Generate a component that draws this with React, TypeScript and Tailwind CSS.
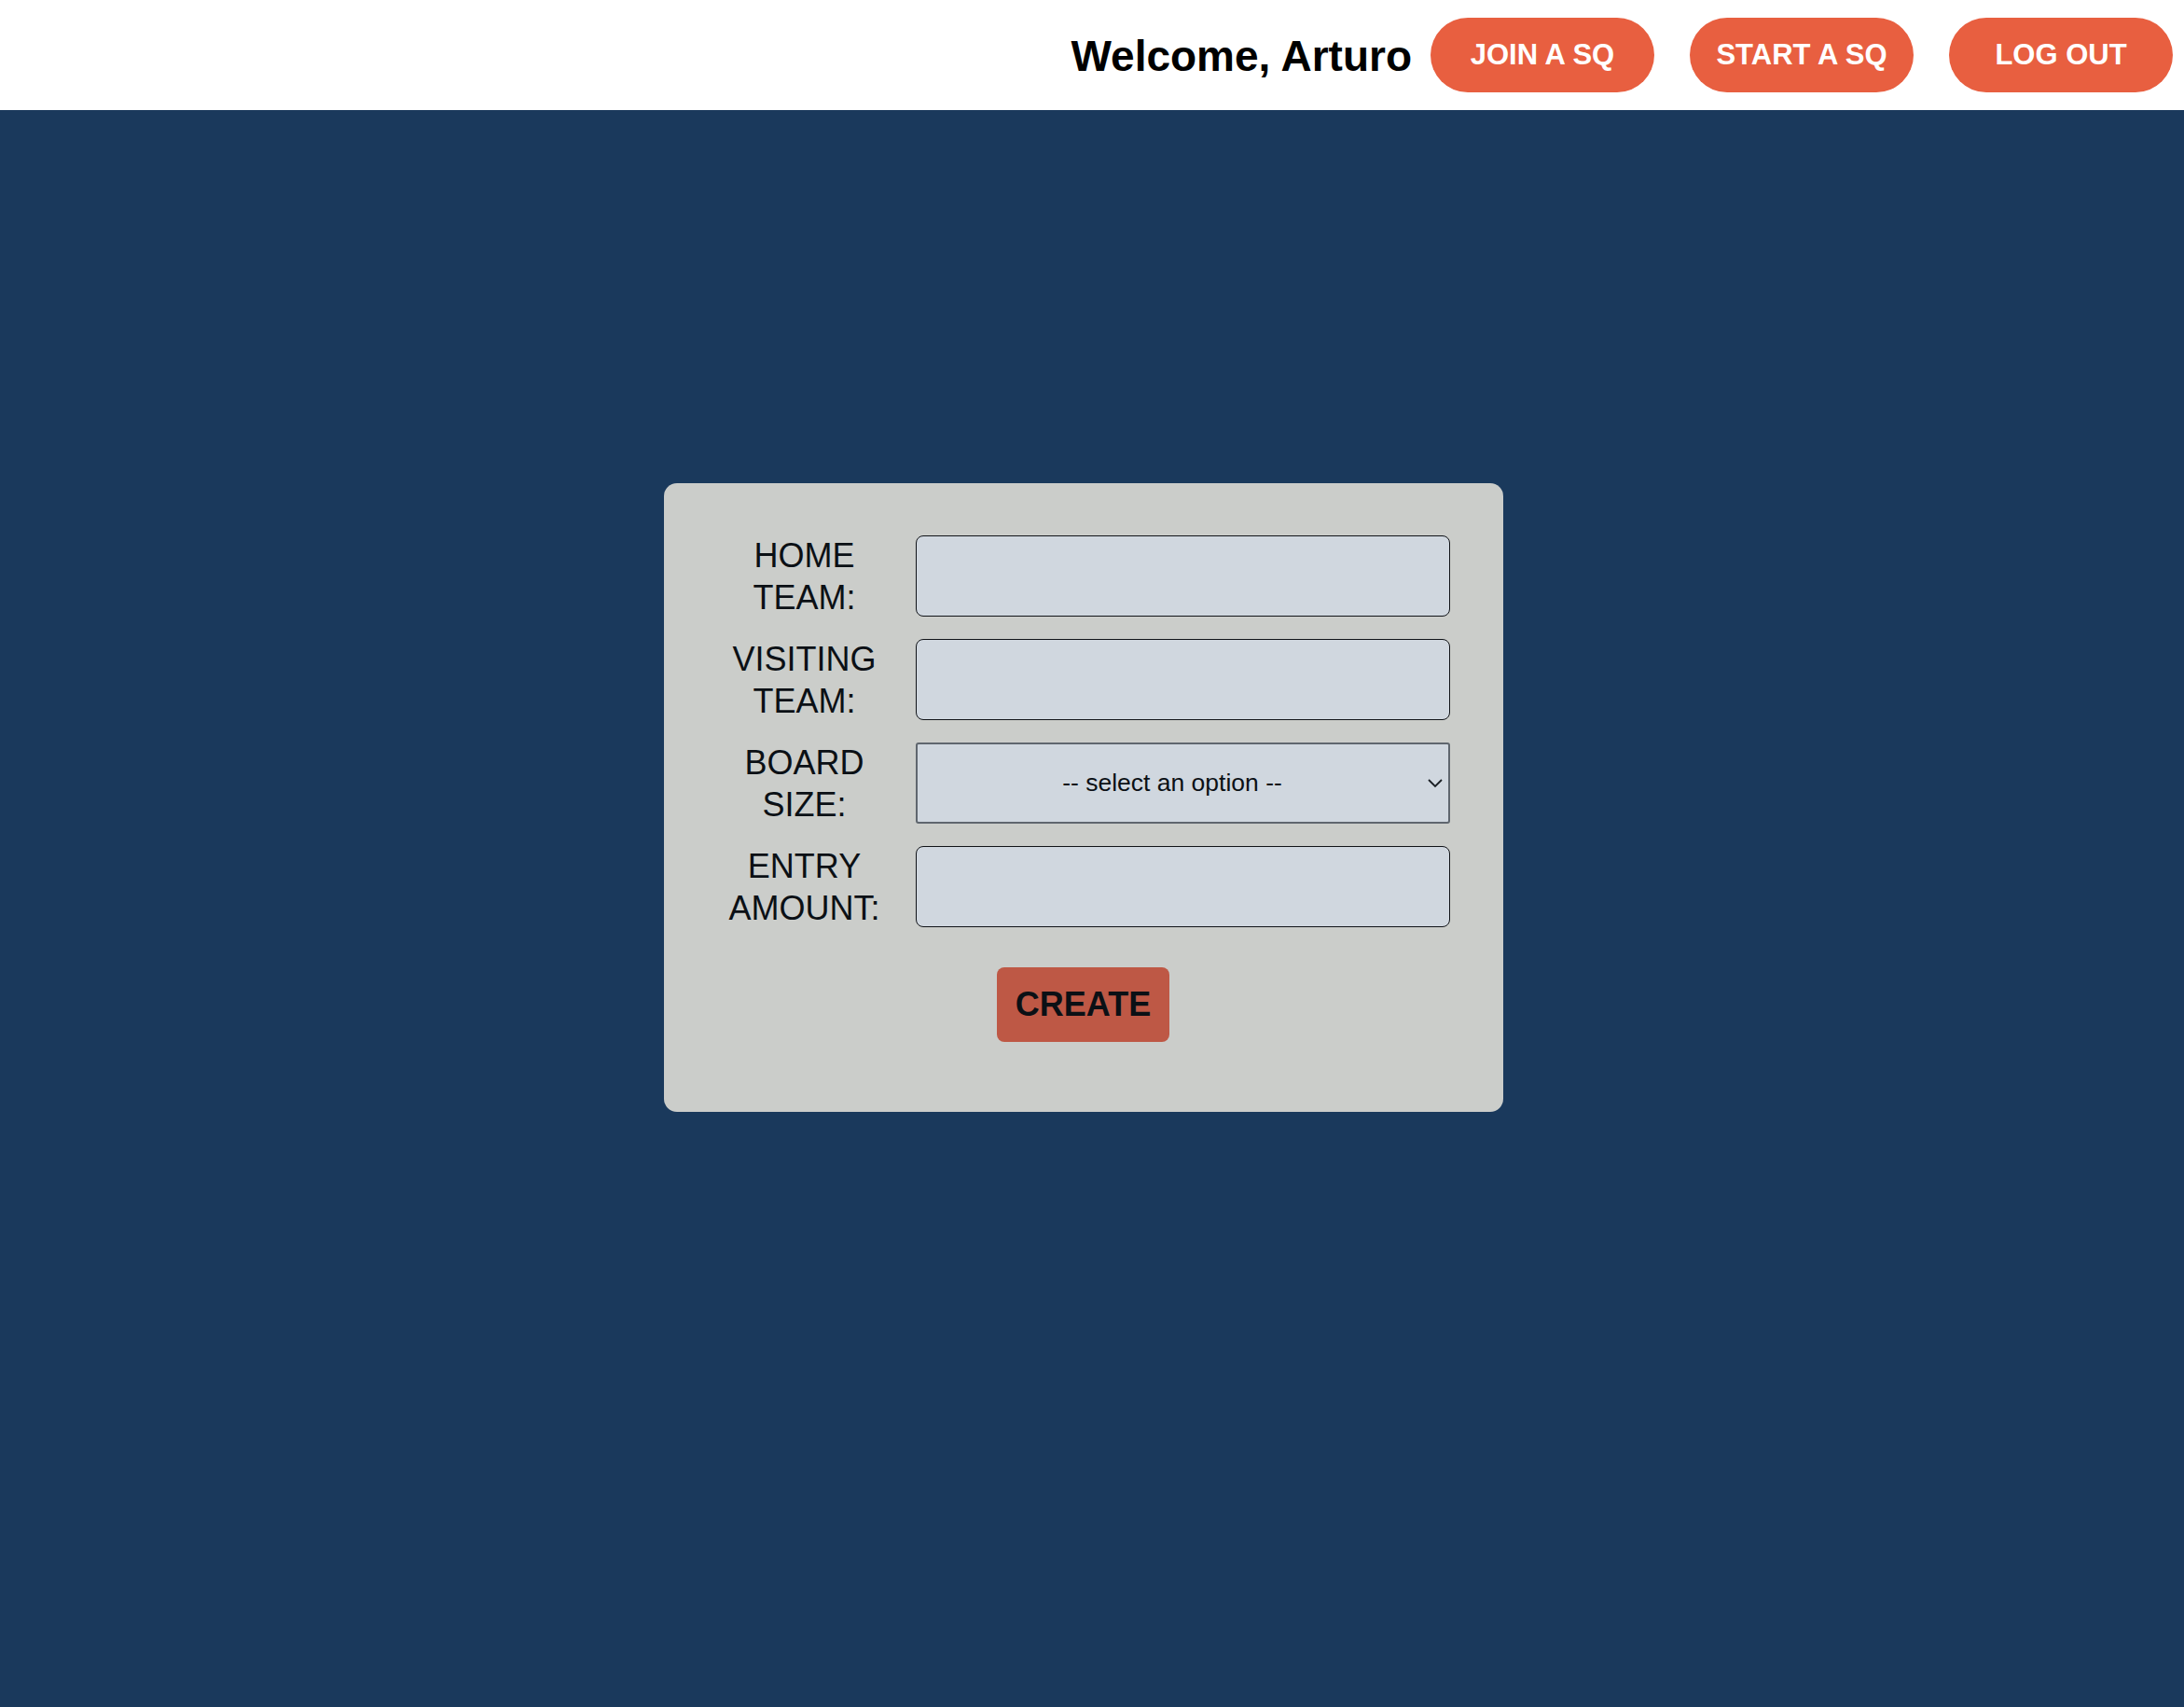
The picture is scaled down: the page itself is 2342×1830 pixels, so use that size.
import React from 'react';

const fields = [
  { label: ['HOME', 'TEAM:'], type: 'input' },
  { label: ['VISITING', 'TEAM:'], type: 'input' },
  { label: ['BOARD', 'SIZE:'], type: 'select' },
  { label: ['ENTRY', 'AMOUNT:'], type: 'input' },
];

const NavButton = ({ children }: { children: React.ReactNode }) => (
  <button className="h-[80px] w-[240px] rounded-full bg-[#e85f40] text-[31px] font-bold text-white">
    {children}
  </button>
);

const App = () => {
  return (
    <div className="min-h-[1830px] bg-[#1a395c] font-['Liberation_Sans',Arial,sans-serif]">
      {/* header */}
      <header className="flex h-[118px] items-center justify-end bg-white pr-[12px]">
        <h1 className="mr-[20px] mt-[2px] text-[46px] font-bold text-black">Welcome, Arturo</h1>
        <div className="flex gap-[38px]">
          <NavButton>JOIN A SQ</NavButton>
          <NavButton>START A SQ</NavButton>
          <NavButton>LOG OUT</NavButton>
        </div>
      </header>

      {/* form card */}
      <div className="flex justify-center pt-[400px] pr-[19px]">
        <form className="w-[900px] rounded-[14px] bg-[#cbcdca] px-[56px] pt-[56px] pb-[75px]">
          <div className="flex flex-col gap-[24px]">
            {fields.map((f, i) => (
              <div key={i} className="flex h-[87px] items-center gap-[24px]">
                <label className="w-[190px] text-center text-[36px] leading-[45px] text-[#0b1015]">
                  {f.label[0]}
                  <br />
                  {f.label[1]}
                </label>
                {f.type === 'select' ? (
                  <div className="relative h-[87px] w-[573px]">
                    <select
                      defaultValue=""
                      className="h-full w-full appearance-none rounded-[3px] border-2 border-[#5f666e] bg-[#d0d7df] pr-[22px] text-center text-[26.5px] text-[#0b1015] outline-none [text-align-last:center]"
                    >
                      <option value="" disabled>
                        -- select an option --
                      </option>
                      <option value="10">10x10</option>
                      <option value="5">5x5</option>
                    </select>
                    <svg
                      className="pointer-events-none absolute top-1/2 right-[8px] -translate-y-1/2"
                      width="16"
                      height="10"
                      viewBox="0 0 16 10"
                      fill="none"
                    >
                      <path d="M1 1l7 7 7-7" stroke="#1a1f24" strokeWidth="1.8" />
                    </svg>
                  </div>
                ) : (
                  <input
                    type="text"
                    className="h-[87px] w-[573px] rounded-[8px] border border-[#111418] bg-[#d0d7df] px-3 text-[26px] outline-none"
                  />
                )}
              </div>
            ))}
          </div>

          <div className="mt-[43px] flex justify-center">
            <button
              type="button"
              className="h-[80px] rounded-[8px] bg-[#be5845] px-[20px] text-[36px] font-bold text-[#0b1015]"
            >
              CREATE
            </button>
          </div>
        </form>
      </div>
    </div>
  );
};

export default App;
